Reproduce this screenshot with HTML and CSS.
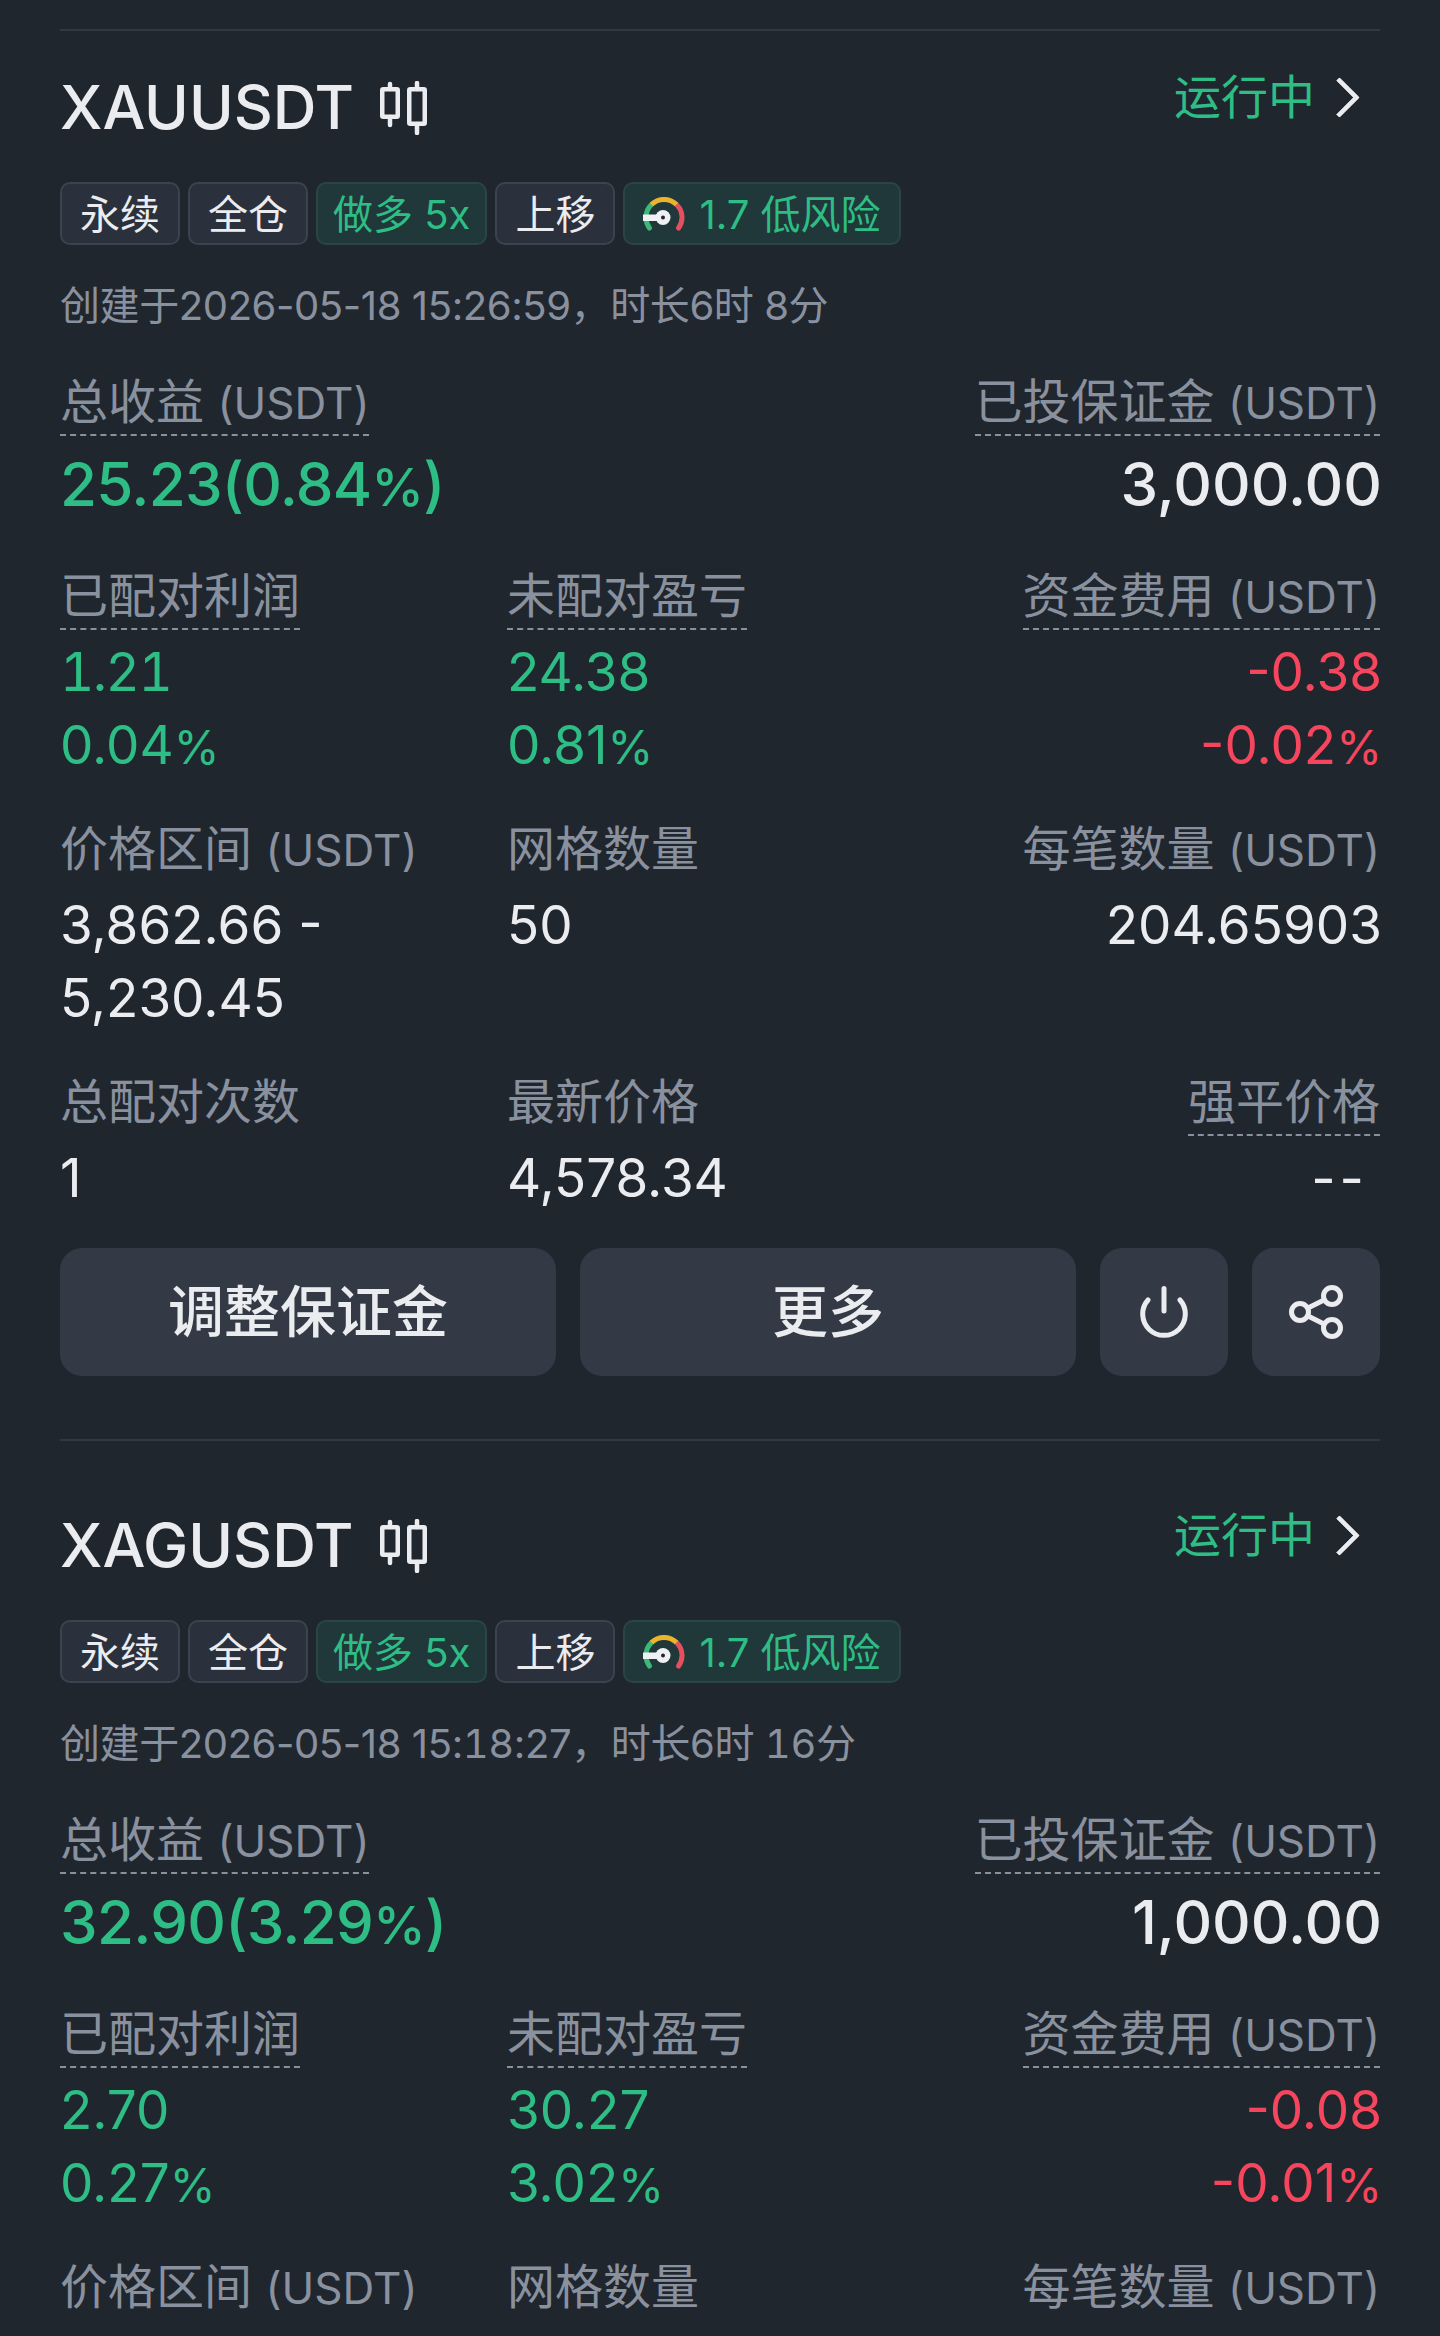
FILE: index.html
```html
<!DOCTYPE html>
<html lang="zh-CN">
<head>
    <meta charset="UTF-8">
    <meta name="viewport" content="width=device-width, initial-scale=1.0">
    <title>合约网格</title>
    <link rel="stylesheet" href="styles.css">
</head>
<body>

<svg class="sprite" width="0" height="0">
    <symbol id="gauge" viewBox="0 0 42 34">
        <g fill="none" stroke-width="5">
            <path d="M6.400 31 A18 18 0 0 1 8.500 7.500" stroke="#3cb879" stroke-linecap="round"/>
            <path d="M33.500 7.500 A18 18 0 0 1 35.600 31" stroke="#e5505f" stroke-linecap="round"/>
            <path d="M8.500 7.500 A18 18 0 0 1 33.500 7.500" stroke="#eab52e"/>
        </g>
        <rect x="0" y="17.500" width="16" height="6.500" fill="#eef0f3"/>
        <circle cx="20" cy="20.500" r="7.500" fill="#eef0f3"/>
        <circle cx="20" cy="20.500" r="2" fill="#20262e"/>
    </symbol>
    <symbol id="candles" viewBox="0 0 50 54">
        <g fill="none" stroke="#eaecef" stroke-width="4.500" stroke-linecap="round">
            <rect x="2.250" y="8.250" width="15.500" height="27.500" rx="1"/>
            <path d="M10 3V8M10 36V44"/>
            <rect x="29.250" y="8.250" width="15.500" height="34.500" rx="1"/>
            <path d="M37 2V8M37 43V52"/>
        </g>
    </symbol>
    <symbol id="power" viewBox="0 0 48 54">
        <g fill="none" stroke="#eaecef" stroke-width="5" stroke-linecap="round">
            <path d="M24 3.500V26"/>
            <path d="M8 15 A21.300 21.300 0 1 0 40 15"/>
        </g>
    </symbol>
    <symbol id="share" viewBox="0 0 54 54">
        <g fill="none" stroke="#eaecef" stroke-width="5">
            <circle cx="43" cy="11" r="8.500"/>
            <circle cx="11" cy="27" r="8.500"/>
            <circle cx="43" cy="43" r="8.500"/>
            <path d="M19 23L35 15M19 31L35 39"/>
        </g>
    </symbol>
</svg>

<div class="page">

    <!-- XAU grid -->
    <div class="card card-first">
        <div class="card-head">
            <div class="symbol">XAUUSDT <svg class="candles"><use href="#candles"/></svg></div>
            <div class="status">运行中 <span class="chevron"></span></div>
        </div>
        <div class="tags">
            <span class="tag">永续</span>
            <span class="tag">全仓</span>
            <span class="tag tag-green">做多 5x</span>
            <span class="tag">上移</span>
            <span class="tag tag-risk"><svg class="gauge"><use href="#gauge"/></svg>1.7 低风险</span>
        </div>
        <div class="created">创建于2026-05-18 15:26:59，时长6时 8分</div>

        <div class="summary">
            <div class="cell">
                <span class="label dashed">总收益 <span class="unit">(USDT)</span></span>
                <div class="big green">25.23(0.84<span class="pc">%</span>)</div>
            </div>
            <div class="cell right">
                <span class="label dashed">已投保证金 <span class="unit">(USDT)</span></span>
                <div class="big">3,000.00</div>
            </div>
        </div>

        <div class="stats">
            <div class="cell">
                <span class="label dashed">已配对利润</span>
                <div class="val green wide-one">1.21</div>
                <div class="val green">0.04<span class="pc">%</span></div>
            </div>
            <div class="cell">
                <span class="label dashed">未配对盈亏</span>
                <div class="val green">24.38</div>
                <div class="val green">0.81<span class="pc">%</span></div>
            </div>
            <div class="cell right">
                <span class="label dashed">资金费用 <span class="unit">(USDT)</span></span>
                <div class="val red">-0.38</div>
                <div class="val red">-0.02<span class="pc">%</span></div>
            </div>

            <div class="cell">
                <span class="label">价格区间 <span class="unit">(USDT)</span></span>
                <div class="val">3,862.66 -</div>
                <div class="val">5,230.45</div>
            </div>
            <div class="cell">
                <span class="label">网格数量</span>
                <div class="val">50</div>
            </div>
            <div class="cell right">
                <span class="label">每笔数量 <span class="unit">(USDT)</span></span>
                <div class="val">204.65903</div>
            </div>

            <div class="cell">
                <span class="label">总配对次数</span>
                <div class="val">1</div>
            </div>
            <div class="cell">
                <span class="label">最新价格</span>
                <div class="val">4,578.34</div>
            </div>
            <div class="cell right">
                <span class="label dashed">强平价格</span>
                <div class="val empty">--</div>
            </div>
        </div>

        <div class="actions">
            <button class="btn">调整保证金</button>
            <button class="btn">更多</button>
            <button class="btn btn-icon"><svg class="icon-power"><use href="#power"/></svg></button>
            <button class="btn btn-icon"><svg class="icon-share"><use href="#share"/></svg></button>
        </div>
    </div>

    <!-- XAG grid -->
    <div class="card">
        <div class="card-head">
            <div class="symbol">XAGUSDT <svg class="candles"><use href="#candles"/></svg></div>
            <div class="status">运行中 <span class="chevron"></span></div>
        </div>
        <div class="tags">
            <span class="tag">永续</span>
            <span class="tag">全仓</span>
            <span class="tag tag-green">做多 5x</span>
            <span class="tag">上移</span>
            <span class="tag tag-risk"><svg class="gauge"><use href="#gauge"/></svg>1.7 低风险</span>
        </div>
        <div class="created">创建于2026-05-18 15:<span class="tnum">18</span>:27，时长6时 <span class="tnum">16</span>分</div>

        <div class="summary">
            <div class="cell">
                <span class="label dashed">总收益 <span class="unit">(USDT)</span></span>
                <div class="big green">32.90(3.29<span class="pc">%</span>)</div>
            </div>
            <div class="cell right">
                <span class="label dashed">已投保证金 <span class="unit">(USDT)</span></span>
                <div class="big">1,000.00</div>
            </div>
        </div>

        <div class="stats">
            <div class="cell">
                <span class="label dashed">已配对利润</span>
                <div class="val green">2.70</div>
                <div class="val green">0.27<span class="pc">%</span></div>
            </div>
            <div class="cell">
                <span class="label dashed">未配对盈亏</span>
                <div class="val green">30.27</div>
                <div class="val green">3.02<span class="pc">%</span></div>
            </div>
            <div class="cell right">
                <span class="label dashed">资金费用 <span class="unit">(USDT)</span></span>
                <div class="val red">-0.08</div>
                <div class="val red">-0.01<span class="pc">%</span></div>
            </div>

            <div class="cell">
                <span class="label">价格区间 <span class="unit">(USDT)</span></span>
            </div>
            <div class="cell">
                <span class="label">网格数量</span>
            </div>
            <div class="cell right">
                <span class="label">每笔数量 <span class="unit">(USDT)</span></span>
            </div>
        </div>
    </div>

</div>

</body>
</html>
```

FILE: styles.css
```css
body {
    margin: 0;
    background-color: #20262e;
    color: #eaecef;
    font-family: Inter, "Noto Sans CJK SC", sans-serif;
}

.sprite {
    display: none;
}

.page {
    height: 2336px;
    padding: 29px 60px 0;
    box-sizing: border-box;
    overflow: hidden;
}

.card {
    border-top: 2px solid #323842;
    padding-top: 72px;
    margin-top: 63px;
}

.card-first {
    padding-top: 44px;
    margin-top: 0;
}

.card-head {
    display: flex;
    align-items: flex-start;
    justify-content: space-between;
}

.symbol {
    display: flex;
    align-items: center;
    gap: 26px;
    font-size: 60.5px;
    line-height: 64px;
    font-weight: 500;
}

.candles {
    width: 50px;
    height: 54px;
    margin-top: 2px;
}

.status {
    display: flex;
    align-items: center;
    gap: 8px;
    margin-top: -6px;
    padding-right: 18px;
    font-size: 47px;
    line-height: 56px;
    color: #2ebd85;
}

.chevron {
    width: 24px;
    height: 24px;
    margin: 0 8px 0 2px;
    border-top: 5px solid #eaecef;
    border-right: 5px solid #eaecef;
    border-radius: 2px;
    transform: rotate(45deg);
}

.tags {
    display: flex;
    gap: 8px;
    margin-top: 43px;
}

.tag {
    display: flex;
    align-items: center;
    justify-content: center;
    box-sizing: border-box;
    height: 63px;
    padding: 0 18px 3px;
    background-color: #2b313c;
    border: 2px solid #3d434e;
    border-radius: 10px;
    font-size: 40px;
}

.tag-green,
.tag-risk {
    background-color: #20383a;
    border-color: #2a4546;
    color: #2ebd85;
}

.tag-green {
    padding: 0 15px 3px;
}

.gauge {
    width: 42px;
    height: 34px;
    margin: 3px 14px 0 0;
}

.created {
    margin-top: 37px;
    font-size: 40px;
    line-height: 48px;
    letter-spacing: -0.4px;
    color: #8a919e;
}

.tnum {
    font-variant-numeric: tabular-nums;
}

.summary {
    display: flex;
    justify-content: space-between;
    margin-top: 44px;
}

.stats {
    display: grid;
    grid-template-columns: 447px 447px 1fr;
    row-gap: 39px;
    margin-top: 48px;
}

.cell {
    display: flex;
    flex-direction: column;
    align-items: flex-start;
}

.right {
    align-items: flex-end;
}

.right .big,
.right .val {
    margin-right: -2px;
}

.label {
    box-sizing: border-box;
    height: 62px;
    padding-bottom: 6px;
    border-bottom: 2px dashed transparent;
    font-size: 48px;
    line-height: 56px;
    color: #8a919e;
}

.dashed {
    border-bottom-color: #8a919e;
}

.unit {
    font-size: 44px;
    line-height: 1;
}

.big {
    margin-top: 12px;
    font-size: 60px;
    line-height: 72px;
    font-weight: 500;
}

.big.green {
    letter-spacing: -0.7px;
}

.val {
    font-size: 53px;
    line-height: 73px;
}

.wide-one {
    font-variant-numeric: tabular-nums;
    letter-spacing: -1.5px;
}

.pc {
    font-size: 0.88em;
    line-height: 1;
}

.label + .val {
    margin-top: 6px;
}

.right .empty {
    margin-right: 12px;
    letter-spacing: 4px;
}

.green {
    color: #2ebd85;
}

.red {
    color: #f6465d;
}

.actions {
    display: flex;
    gap: 24px;
    margin-top: 33px;
}

.btn {
    flex: 1;
    height: 128px;
    padding: 0 0 9px;
    background-color: #343a45;
    color: #eaecef;
    border: none;
    border-radius: 22px;
    font-family: inherit;
    font-size: 56px;
    font-weight: 500;
}

.btn-icon {
    display: flex;
    align-items: center;
    justify-content: center;
    flex: 0 0 128px;
    padding: 0;
}

.icon-power {
    width: 48px;
    height: 54px;
}

.icon-share {
    width: 54px;
    height: 54px;
}
```
